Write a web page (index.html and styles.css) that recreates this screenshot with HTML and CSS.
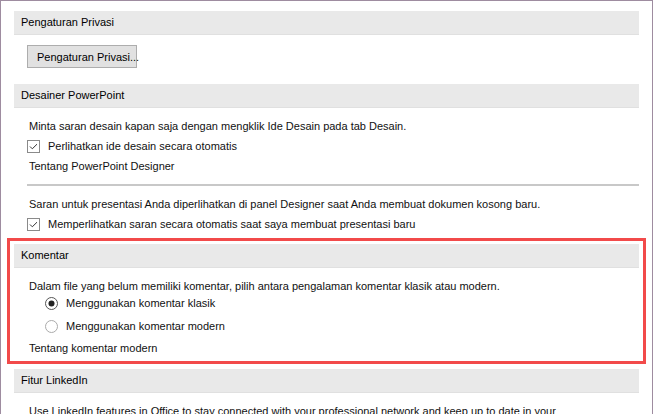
FILE: index.html
```html
<!DOCTYPE html>
<html lang="id">
<head>
<meta charset="utf-8">
<title>Opsi PowerPoint</title>
<link rel="stylesheet" href="styles.css">
</head>
<body>
<div class="frame">
  <section class="group first">
    <div class="group-head">Pengaturan Privasi</div>
    <button class="btn" type="button">Pengaturan Privasi...</button>
  </section>

  <section class="group designer">
    <div class="group-head">Desainer PowerPoint</div>
    <div class="body">
      <p class="line">Minta saran desain kapan saja dengan mengklik Ide Desain pada tab Desain.</p>
      <label class="check-row">
        <span class="check"><svg width="13" height="13" viewBox="0 0 13 13"><rect x="0.5" y="0.5" width="12" height="12" fill="#fff" stroke="#8a8a8a"/><path d="M3 6.5 L5.3 8.8 L10 4.2" fill="none" stroke="#333" stroke-width="1"/></svg></span>
        <span>Perlihatkan ide desain secara otomatis</span>
      </label>
      <p class="line link">Tentang PowerPoint Designer</p>
      <hr class="sep">
      <p class="line saran">Saran untuk presentasi Anda diperlihatkan di panel Designer saat Anda membuat dokumen kosong baru.</p>
      <label class="check-row">
        <span class="check"><svg width="13" height="13" viewBox="0 0 13 13"><rect x="0.5" y="0.5" width="12" height="12" fill="#fff" stroke="#8a8a8a"/><path d="M3 6.5 L5.3 8.8 L10 4.2" fill="none" stroke="#333" stroke-width="1"/></svg></span>
        <span>Memperlihatkan saran secara otomatis saat saya membuat presentasi baru</span>
      </label>
    </div>
  </section>

  <section class="group highlight">
    <div class="group-head">Komentar</div>
    <div class="body">
      <p class="line dalam">Dalam file yang belum memiliki komentar, pilih antara pengalaman komentar klasik atau modern.</p>
      <label class="radio-row">
        <span class="radio"><svg width="13" height="13" viewBox="0 0 13 13"><circle cx="6.5" cy="6.5" r="6" fill="#fff" stroke="#555"/><circle cx="6.5" cy="6.5" r="3" fill="#222"/></svg></span>
        <span>Menggunakan komentar klasik</span>
      </label>
      <label class="radio-row second">
        <span class="radio"><svg width="13" height="13" viewBox="0 0 13 13"><circle cx="6.5" cy="6.5" r="6" fill="#fff" stroke="#aaa"/></svg></span>
        <span>Menggunakan komentar modern</span>
      </label>
      <p class="line link tentang">Tentang komentar modern</p>
    </div>
  </section>

  <section class="group linkedin">
    <div class="group-head">Fitur LinkedIn</div>
    <div class="body">
      <p class="line">Use LinkedIn features in Office to stay connected with your professional network and keep up to date in your</p>
    </div>
  </section>
</div>
</body>
</html>
```

FILE: styles.css
```css
html, body {
  margin: 0;
  padding: 0;
  background: #fff;
}

body {
  font-family: "Liberation Sans", Arial, sans-serif;
  font-size: 11px;
  color: #111;
  overflow: hidden;
}

.frame {
  box-sizing: border-box;
  width: 653px;
  height: 414px;
  border: 1px solid #9e8ca0;
  border-bottom: none;
  padding: 0 13px;
  overflow: hidden;
}

.group-head {
  height: 23px;
  line-height: 23px;
  background: #e9e9e9;
  border-bottom: 1px solid #e0e0e0;
  padding-left: 7px;
  color: #000;
  white-space: nowrap;
}

.first {
  margin-top: 10px;
}

.btn {
  display: block;
  box-sizing: border-box;
  width: 110px;
  height: 23px;
  margin: 10px 0 0 13px;
  padding: 0 0 0 9px;
  text-align: left;
  white-space: nowrap;
  font-family: inherit;
  font-size: 11px;
  color: #000;
  background: #e1e1e1;
  border: 1px solid #adadad;
  border-radius: 0;
}

.designer {
  margin-top: 16px;
}

.body {
  padding-left: 15px;
}

.line {
  margin: 0;
  line-height: 20px;
  white-space: nowrap;
}

.designer .body {
  padding-top: 8px;
}

.check-row,
.radio-row {
  display: flex;
  align-items: center;
  white-space: nowrap;
  height: 20px;
}

.check-row {
  margin-left: -2px;
  gap: 8px;
}

.check,
.radio {
  display: flex;
  width: 13px;
  height: 13px;
}

.sep {
  margin: 8px 0 0 -2px;
  border: none;
  height: 2px;
  background: #c8c8c8;
}

.saran {
  margin-top: 8px;
}

.highlight {
  margin: 4px -7px 0;
  border: 3px solid #f24a4a;
  padding: 3px 4px 5px;
}

.dalam {
  margin-top: 9px;
  line-height: 18px;
}

.radio-row {
  height: 16px;
  margin-left: 16px;
  gap: 8px;
}

.radio-row.second {
  margin-top: 7px;
}

.tentang {
  margin-top: 6px;
  line-height: 16px;
}

.linkedin {
  margin-top: 5px;
}

.linkedin .body {
  padding-top: 8px;
}
```
